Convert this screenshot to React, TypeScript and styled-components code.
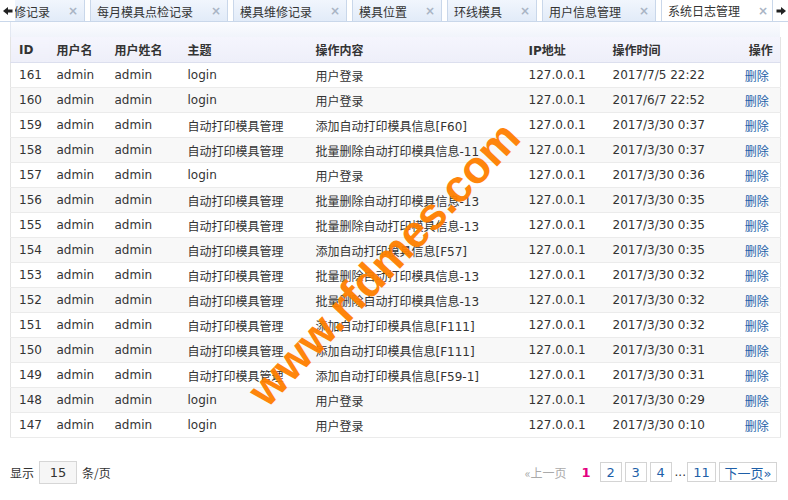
import React from "react";
import styled, { createGlobalStyle } from "styled-components";

const GlobalStyle = createGlobalStyle`
  html, body { margin: 0; padding: 0; background: #fff; }
  body { font-family: "DejaVu Sans", "Noto Sans CJK SC", sans-serif; font-size: 12px; color: #333; }
`;

const Page = styled.div`
  position: relative;
  width: 788px;
  height: 500px;
  overflow: hidden;
  background: #fff;
`;

const TabBar = styled.div`
  display: flex;
  height: 22px;
  border-bottom: 1px solid #c9d7ea;
  box-sizing: border-box;
`;

const Scroller = styled.div<{ $side: "left" | "right" }>`
  flex: 0 0 15px;
  display: flex;
  align-items: center;
  justify-content: center;
  background: #fff;
  border-left: ${(p) => (p.$side === "right" ? "1px solid #c9d7ea" : "none")};
  margin-left: ${(p) => (p.$side === "right" ? "3px" : "0")};
`;

const Strip = styled.div`
  flex: 1;
  overflow: hidden;
  display: flex;
`;

const TabsInner = styled.div`
  display: flex;
  gap: 5px;
  margin-left: -44px;
  flex-shrink: 0;
`;

const Tab = styled.div<{ $active?: boolean }>`
  display: flex;
  align-items: center;
  height: 22px;
  box-sizing: border-box;
  padding: 0 6px;
  border: 1px solid #c9d7ea;
  border-top: none;
  border-bottom: ${(p) => (p.$active ? "1px solid #fff" : "none")};
  background: ${(p) =>
    p.$active ? "#fff" : "linear-gradient(to bottom, #f1f6fd 0%, #e1ebf8 100%)"};
  color: #333;
  font-family: "Noto Sans CJK SC", sans-serif;
  font-size: 12px;
  white-space: nowrap;
  flex-shrink: 0;
`;

const Close = styled.span`
  width: 10px;
  margin-left: 18px;
  color: #a9b4c4;
  font-size: 12px;
  font-weight: bold;
  text-align: center;
  font-family: "DejaVu Sans", sans-serif;
`;

const Panel = styled.div`
  margin-left: 10px;
  width: 770px;
`;

const PanelTop = styled.div`
  height: 15px;
  border-left: 1px solid #e3e8f2;
  background: linear-gradient(to bottom, #fbfcff 0%, #f1f4fb 100%);
`;

const Table = styled.table`
  width: 770px;
  border-collapse: collapse;
  table-layout: fixed;
  border-left: 1px solid #e4e4e4;
  border-right: 1px solid #e4e4e4;
`;

const HeadCell = styled.th<{ $center?: boolean }>`
  height: 25px;
  padding: 0 0 0 8px;
  text-align: ${(p) => (p.$center ? "center" : "left")};
  font-weight: bold;
  font-size: 12px;
  color: #333;
  background: linear-gradient(to bottom, #f5f5fd 0%, #eeeff9 100%);
  border-bottom: 1px solid #dcdfee;
  font-family: "DejaVu Sans", "Noto Sans CJK SC", sans-serif;
`;

const Row = styled.tr<{ $alt: boolean }>`
  background: ${(p) => (p.$alt ? "#f8f8f8" : "#fff")};
`;

const Cell = styled.td<{ $center?: boolean }>`
  height: 24px;
  padding: 0 0 0 8px;
  text-align: ${(p) => (p.$center ? "center" : "left")};
  border-bottom: 1px solid #ebebeb;
  white-space: nowrap;
  overflow: hidden;
  color: #333;
`;

const DelLink = styled.a`
  color: #1e5fa8;
  text-decoration: none;
  font-family: "Noto Sans CJK SC", sans-serif;
  padding-right: 8px;
`;

const Footer = styled.div`
  display: flex;
  align-items: center;
  justify-content: space-between;
  margin-top: 22px;
  padding-left: 10px;
  width: 767px;
  height: 24px;
`;

const PageSize = styled.div`
  display: flex;
  align-items: center;
  gap: 4px;
  font-family: "Noto Sans CJK SC", sans-serif;
  color: #333;
`;

const SizeBox = styled.div`
  width: 36px;
  height: 21px;
  border: 1px solid #d6d6d6;
  background: #f6f6f6;
  display: flex;
  align-items: center;
  justify-content: center;
  font-size: 13px;
  font-family: "DejaVu Sans", sans-serif;
  margin: 0 1px;
`;

const Pager = styled.div`
  display: flex;
  align-items: center;
  gap: 3px;
`;

const PrevLabel = styled.span`
  color: #aaa;
  font-family: "Noto Sans CJK SC", sans-serif;
  margin-right: 12px;
`;

const Current = styled.span`
  color: #e4007f;
  font-weight: bold;
  font-size: 13px;
  margin-right: 6px;
`;

const PageBtn = styled.span<{ $w: number }>`
  width: ${(p) => p.$w}px;
  height: 20px;
  border: 1px solid #d4d4d4;
  display: flex;
  align-items: center;
  justify-content: center;
  color: #1e5fa8;
  font-size: 13px;
  box-sizing: border-box;
  background: #fff;
  font-family: "DejaVu Sans", "Noto Sans CJK SC", sans-serif;
`;

const Ellipsis = styled.span`
  color: #333;
  margin: 0 -2px 0 0;
`;

const Watermark = styled.div`
  position: absolute;
  left: 384px;
  top: 264px;
  transform: translate(-50%, -50%) rotate(-46.5deg);
  color: #ff7f00;
  font-family: "Liberation Sans", Arial, sans-serif;
  font-weight: bold;
  font-size: 45px;
  white-space: nowrap;
  pointer-events: none;
  opacity: 0.95;
`;

const tabs = ["模具送修记录", "每月模具点检记录", "模具维修记录", "模具位置", "环线模具", "用户信息管理", "系统日志管理"];

type Log = [number, string, string, string];

const rows: Log[] = [
  [161, "login", "用户登录", "2017/7/5 22:22"],
  [160, "login", "用户登录", "2017/6/7 22:52"],
  [159, "自动打印模具管理", "添加自动打印模具信息[F60]", "2017/3/30 0:37"],
  [158, "自动打印模具管理", "批量删除自动打印模具信息-11", "2017/3/30 0:37"],
  [157, "login", "用户登录", "2017/3/30 0:36"],
  [156, "自动打印模具管理", "批量删除自动打印模具信息-13", "2017/3/30 0:35"],
  [155, "自动打印模具管理", "批量删除自动打印模具信息-13", "2017/3/30 0:35"],
  [154, "自动打印模具管理", "添加自动打印模具信息[F57]", "2017/3/30 0:35"],
  [153, "自动打印模具管理", "批量删除自动打印模具信息-13", "2017/3/30 0:32"],
  [152, "自动打印模具管理", "批量删除自动打印模具信息-13", "2017/3/30 0:32"],
  [151, "自动打印模具管理", "添加自动打印模具信息[F111]", "2017/3/30 0:32"],
  [150, "自动打印模具管理", "添加自动打印模具信息[F111]", "2017/3/30 0:31"],
  [149, "自动打印模具管理", "添加自动打印模具信息[F59-1]", "2017/3/30 0:31"],
  [148, "login", "用户登录", "2017/3/30 0:29"],
  [147, "login", "用户登录", "2017/3/30 0:10"],
];

const cols = [38, 58, 73, 128, 213, 84, 129, 47];

const Arrow = ({ dir }: { dir: "left" | "right" }) => (
  <svg width="10" height="10" viewBox="0 0 10 10">
    <g transform={dir === "right" ? "translate(10,0) scale(-1,1)" : undefined}>
      <path d="M0 5 L5 1 L5 3.6 L9.5 3.6 L9.5 6.4 L5 6.4 L5 9 Z" fill="#222" />
    </g>
  </svg>
);

export default function App() {
  return (
    <Page>
      <GlobalStyle />
      <TabBar>
        <Scroller $side="left">
          <Arrow dir="left" />
        </Scroller>
        <Strip>
          <TabsInner>
            {tabs.map((t, i) => (
              <Tab key={t} $active={i === tabs.length - 1}>
                {t}
                <Close>×</Close>
              </Tab>
            ))}
          </TabsInner>
        </Strip>
        <Scroller $side="right">
          <Arrow dir="right" />
        </Scroller>
      </TabBar>
      <Panel>
        <PanelTop />
        <Table>
          <colgroup>
            {cols.map((w, i) => (
              <col key={i} style={{ width: w }} />
            ))}
          </colgroup>
          <thead>
            <tr>
              <HeadCell>ID</HeadCell>
              <HeadCell>用户名</HeadCell>
              <HeadCell>用户姓名</HeadCell>
              <HeadCell>主题</HeadCell>
              <HeadCell>操作内容</HeadCell>
              <HeadCell>IP地址</HeadCell>
              <HeadCell>操作时间</HeadCell>
              <HeadCell $center>操作</HeadCell>
            </tr>
          </thead>
          <tbody>
            {rows.map(([id, subject, content, time], i) => (
              <Row key={id} $alt={i % 2 === 1}>
                <Cell>{id}</Cell>
                <Cell>admin</Cell>
                <Cell>admin</Cell>
                <Cell>{subject}</Cell>
                <Cell>{content}</Cell>
                <Cell>127.0.0.1</Cell>
                <Cell>{time}</Cell>
                <Cell $center>
                  <DelLink href="#">删除</DelLink>
                </Cell>
              </Row>
            ))}
          </tbody>
        </Table>
      </Panel>
      <Footer>
        <PageSize>
          显示<SizeBox>15</SizeBox>条/页
        </PageSize>
        <Pager>
          <PrevLabel>«上一页</PrevLabel>
          <Current>1</Current>
          <PageBtn $w={22}>2</PageBtn>
          <PageBtn $w={22}>3</PageBtn>
          <PageBtn $w={22}>4</PageBtn>
          <Ellipsis>...</Ellipsis>
          <PageBtn $w={29}>11</PageBtn>
          <PageBtn $w={58}>下一页»</PageBtn>
        </Pager>
      </Footer>
      <Watermark>www.rfdmes.com</Watermark>
    </Page>
  );
}
